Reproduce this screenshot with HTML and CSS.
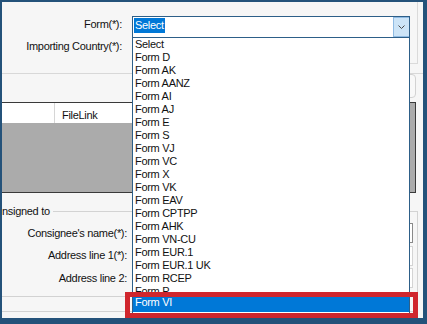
FILE: index.html
```html
<!DOCTYPE html>
<html lang="en">
<head>
  <meta charset="UTF-8" />
  <title>Certificate of Origin - Form</title>
  <link rel="stylesheet" href="styles.css">
</head>
<body>

<div class="window">

  <!-- Form / country selectors -->
  <div class="head">
    <div class="head-labels">
      <div class="label">Form(*):</div>
      <div class="label label-country">Importing Country(*):</div>
    </div>
    <div class="head-fields">
      <div class="combo">
        <span class="combo-value">Select</span>
        <span class="combo-btn">
          <svg width="7" height="4" viewBox="0 0 7 4"><path d="M0.5 0.5 L3.5 3.5 L6.5 0.5" fill="none" stroke="#4a4a4a" stroke-width="1"/></svg>
        </span>
      </div>
    </div>
  </div>

  <div class="toolbar">
    <div class="toolbar-inner">
      <span class="tool-btn"></span>
    </div>
  </div>

  <!-- attachments grid -->
  <div class="grid">
    <div class="grid-head">
      <div class="cell row-head"></div>
      <div class="cell">FileLink</div>
    </div>
    <div class="grid-body"></div>
  </div>

  <!-- consignee group (scrolled, its caption starts off-screen) -->
  <div class="group">
    <span class="legend">nsigned to</span>
    <div class="field">
      <span class="field-label">Consignee's name(*):</span>
      <span class="input focused"></span>
    </div>
    <div class="field">
      <span class="field-label">Address line 1(*):</span>
      <span class="input"></span>
    </div>
    <div class="field">
      <span class="field-label">Address line 2:</span>
      <span class="input"></span>
    </div>
    <div class="sep"></div>
    <div class="sep sep-last"></div>
  </div>

  <!-- open combo list -->
  <ul class="dropdown">
    <li>Select</li>
    <li>Form D</li>
    <li>Form AK</li>
    <li>Form AANZ</li>
    <li>Form AI</li>
    <li>Form AJ</li>
    <li>Form E</li>
    <li>Form S</li>
    <li>Form VJ</li>
    <li>Form VC</li>
    <li>Form X</li>
    <li>Form VK</li>
    <li>Form EAV</li>
    <li>Form CPTPP</li>
    <li>Form AHK</li>
    <li>Form VN-CU</li>
    <li>Form EUR.1</li>
    <li>Form EUR.1 UK</li>
    <li>Form RCEP</li>
    <li>Form P</li>
    <li class="selected">Form VI</li>
  </ul>

  <!-- highlight annotation -->
  <div class="callout"></div>

</div>

</body>
</html>
```

FILE: styles.css
```css
body {
  margin: 0;
  background: #24527a;
  font-family: "Liberation Sans", Arial, sans-serif;
  font-size: 11px;
  letter-spacing: -0.3px;
  color: #111;
}

.window {
  position: relative;
  box-sizing: border-box;
  width: 427px;
  height: 324px;
  background: #f6f6f6;
  border: solid #24527a;
  border-width: 2px 4px 6px 2px;
  overflow: hidden;
}

.label,
.field-label {
  line-height: 13px;
  white-space: nowrap;
}

/* top selectors */
.head {
  display: flex;
  height: 62px;
}

.head-labels {
  width: 120px;
  padding-top: 16px;
  text-align: right;
}

.label-country {
  margin-top: 9px;
}

.head-fields {
  box-sizing: border-box;
  width: 286px;
  margin-left: 10px;
  padding-top: 14px;
  border-right: 1px solid #dadada;
  border-bottom: 1px solid #dadada;
}

.combo {
  box-sizing: border-box;
  display: flex;
  align-items: flex-start;
  width: 278px;
  height: 22px;
  background: #fff;
  border: 1px solid #2d5f88;
}

.combo-value {
  margin: 1px;
  padding: 0 1px;
  height: 15px;
  line-height: 15px;
  background: #0078d7;
  color: #fff;
}

.combo-btn {
  box-sizing: border-box;
  display: flex;
  align-items: center;
  justify-content: center;
  margin-left: auto;
  width: 16px;
  height: 20px;
  background: #cce4f7;
  border: 1px solid #8fbbe3;
  border-right: none;
}

/* toolbar strip */
.toolbar {
  height: 38px;
  padding-top: 9px;
  box-sizing: border-box;
}

.toolbar-inner {
  display: flex;
  height: 28px;
  border-top: 1px solid #d8d8d8;
}

.tool-btn {
  margin-left: auto;
  margin-right: 7px;
  width: 60px;
  height: 24px;
  box-sizing: border-box;
  border: 1px solid #d2d2d2;
  border-radius: 0 4px 4px 0;
  background: #f8f8f8;
}

/* grid */
.grid {
  margin-right: 7px;
  border: 1px solid #3a3a3a;
  border-left: none;
}

.grid-head {
  display: flex;
  height: 20px;
  background: #ababab;
}

.cell {
  box-sizing: border-box;
  height: 20px;
  padding: 4px 0 0 7px;
  line-height: 16px;
  background: #fff;
  width: 245px;
}

.row-head {
  width: 53px;
  padding: 0;
  border-right: 1px solid #d6d6d6;
}

.grid-body {
  height: 69px;
  background: #ababab;
}

/* consignee group */
.group {
  margin-top: 18px;
  margin-right: 5px;
  border-top: 1px solid #d3d3d3;
  border-right: 1px solid #d3d3d3;
  height: 120px;
}

.legend {
  display: block;
  width: fit-content;
  height: 13px;
  line-height: 13px;
  margin: -7px 0 0 0;
  padding-right: 3px;
  background: #f6f6f6;
}

.field {
  display: flex;
  align-items: center;
  height: 20px;
  margin-top: 2.5px;
}

.field:first-of-type {
  margin-top: 5px;
}

.field-label {
  width: 125px;
  text-align: right;
}

.input {
  box-sizing: border-box;
  width: 281px;
  height: 20px;
  margin-left: 5px;
  background: #fff;
  border: 1px solid #d4d4d4;
}

.input.focused {
  border-color: #8a8a8a;
}

.sep {
  margin-top: 8px;
  border-top: 1px solid #d2d2d2;
}

.sep-last {
  margin-top: 14px;
}

/* dropdown list of the combo */
.dropdown {
  position: absolute;
  left: 130px;
  top: 35px;
  box-sizing: border-box;
  width: 278px;
  margin: 0;
  padding: 0 0 10px;
  list-style: none;
  background: #fff;
  border: 1px solid #2d5f88;
}

.dropdown li {
  height: 13px;
  line-height: 13px;
  padding-left: 2px;
  white-space: nowrap;
}

.dropdown li.selected {
  margin-top: -1px;
  height: 15px;
  line-height: 11px;
  background: #0078d7;
  color: #fff;
}

/* red marker round the chosen entry */
.callout {
  position: absolute;
  left: 123px;
  top: 290px;
  box-sizing: border-box;
  width: 293px;
  height: 26px;
  border: 5px solid #d0262d;
}
```
